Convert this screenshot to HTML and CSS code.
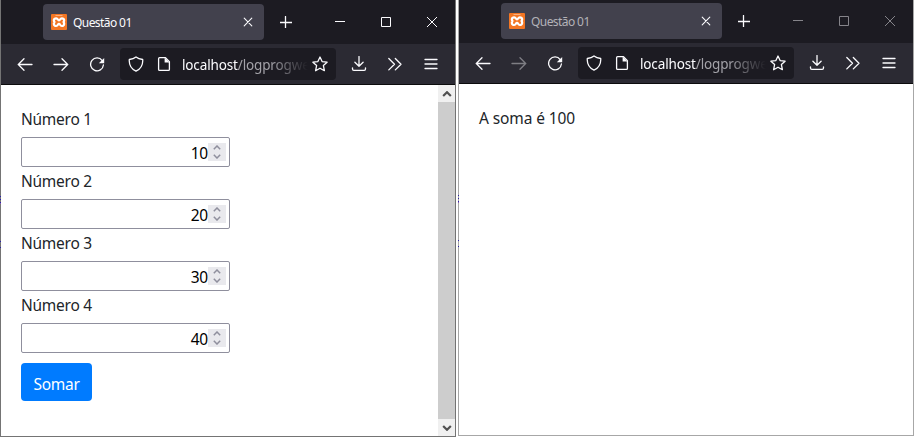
FILE: index.html
```html
<!DOCTYPE html>
<html lang="pt-BR">
<head>
<meta charset="utf-8">
<title>Questão 01</title>
<link rel="stylesheet" href="styles.css">
</head>
<body>
<svg class="defs" width="0" height="0">
  <symbol id="favicon" viewBox="0 0 16 16"><rect width="16" height="16" rx="1" fill="#f37623"/><path d="M4.500 1.500H11.500" stroke="#fff" stroke-opacity=".6" stroke-width=".7"/><path d="M5.200 4.300c-3 0-2.900 3.300-1 3.700c-1.900.4-2 4 1 4c1.900 0 1.500-2.100 2.800-2.100s.9 2.100 2.800 2.100c3 0 2.900-3.600 1-4c1.900-.4 2-3.700-1-3.700c-1.900 0-1.500 2-2.800 2s-.9-2-2.800-2z" fill="none" stroke="#fff" stroke-width="2.200"/></symbol>
  <symbol id="back" viewBox="0 0 16 16"><path d="M1.200 8.500H15M7 2.800L1.300 8.500L7 14.200"/></symbol>
  <symbol id="forward" viewBox="0 0 16 16"><path d="M1 8.500H14.800M9 2.800l5.700 5.700L9 14.200"/></symbol>
  <symbol id="reload" viewBox="0 0 16 16"><path d="M13.200 4.600A6.400 6.400 0 1 0 14.400 9"/><path class="solid" d="M15.200 2v5.200H9.800z"/></symbol>
  <symbol id="shield" viewBox="0 0 16 16"><path d="M8 .9C6.200 2.400 3.800 3.200 1.300 3.500C.9 8.600 3 12.800 8 15.200C13 12.800 15.100 8.600 14.700 3.500C12.200 3.200 9.800 2.400 8 .9z"/></symbol>
  <symbol id="page" viewBox="0 0 16 16"><path d="M3.600 1.700H9.500L13.400 5.600V13.400q0 1-1 1H3.600q-1 0-1-1V2.700q0-1 1-1z"/><path class="solid" d="M8.600 1.500V6.500H13.500z"/></symbol>
  <symbol id="star" viewBox="0 0 16 16"><path d="M8 1l2.100 4.600l5 .6l-3.700 3.400l1 5.100L8 12.200l-4.400 2.500l1-5.100L.9 6.200l5-.6z"/></symbol>
  <symbol id="download" viewBox="0 0 16 16"><path d="M8 .5V10M3.900 6.200L8 10.300l4.100-4.100M1.500 11.800V13q0 1.300 1.300 1.300H13.200q1.300 0 1.300-1.300V11.800"/></symbol>
  <symbol id="more" viewBox="0 0 16 16"><path d="M1.800 2.500l5.700 5.700l-5.700 5.700M8.300 2.500L14 8.200l-5.700 5.700"/></symbol>
  <symbol id="menu" viewBox="0 0 16 16"><path d="M2 3.500H14M2 8H14M2 12.500H14"/></symbol>
  <symbol id="tabclose" viewBox="0 0 10 10"><path d="M1.200 1.200l7.600 7.600M8.800 1.200L1.200 8.800"/></symbol>
  <symbol id="plus" viewBox="0 0 12 12"><path d="M0 6.500H12M5.500 .5V12"/></symbol>
  <symbol id="min" viewBox="0 0 10 10"><path d="M0 4.500H10"/></symbol>
  <symbol id="max" viewBox="0 0 10 10"><path d="M.5 .5H9.500V9.500H.5z"/></symbol>
  <symbol id="close" viewBox="0 0 10 10"><path d="M0 0L10 10M10 0L0 10"/></symbol>
  <symbol id="chev" viewBox="0 0 8 5"><path d="M.8 4.200L4 1l3.200 3.200"/></symbol>
</svg>
<main class="desktop">
  <section class="window active">
    <header class="titlebar">
      <div class="tab"><svg class="favicon"><use href="#favicon"/></svg><span class="tab-title">Questão 01</span><svg class="icon tab-close"><use href="#tabclose"/></svg></div>
      <svg class="icon new-tab"><use href="#plus"/></svg>
      <div class="controls"><svg class="icon"><use href="#min"/></svg><svg class="icon"><use href="#max"/></svg><svg class="icon"><use href="#close"/></svg></div>
    </header>
    <nav class="toolbar">
      <span class="tool"><svg class="icon"><use href="#back"/></svg></span>
      <span class="tool"><svg class="icon"><use href="#forward"/></svg></span>
      <span class="tool"><svg class="icon"><use href="#reload"/></svg></span>
      <div class="urlbar"><svg class="icon"><use href="#shield"/></svg><svg class="icon page-icon"><use href="#page"/></svg><span class="url">localhost<span class="path">/logprogwe</span></span><svg class="icon star"><use href="#star"/></svg></div>
      <span class="tool"><svg class="icon"><use href="#download"/></svg></span>
      <span class="tool"><svg class="icon"><use href="#more"/></svg></span>
      <span class="tool"><svg class="icon"><use href="#menu"/></svg></span>
    </nav>
    <div class="viewport">
      <form class="content">
        <label class="label">Número 1</label>
        <div class="number"><span class="value">10</span><span class="spin"><svg><use href="#chev"/></svg><svg class="down"><use href="#chev"/></svg></span></div>
        <label class="label">Número 2</label>
        <div class="number"><span class="value">20</span><span class="spin"><svg><use href="#chev"/></svg><svg class="down"><use href="#chev"/></svg></span></div>
        <label class="label">Número 3</label>
        <div class="number"><span class="value">30</span><span class="spin"><svg><use href="#chev"/></svg><svg class="down"><use href="#chev"/></svg></span></div>
        <label class="label">Número 4</label>
        <div class="number"><span class="value">40</span><span class="spin"><svg><use href="#chev"/></svg><svg class="down"><use href="#chev"/></svg></span></div>
        <button class="submit" type="button">Somar</button>
      </form>
      <div class="scrollbar"><span class="arrow"><svg><use href="#chev"/></svg></span><span class="thumb"></span><span class="arrow"><svg class="down"><use href="#chev"/></svg></span></div>
    </div>
  </section>
  <section class="window inactive">
    <header class="titlebar">
      <div class="tab"><svg class="favicon"><use href="#favicon"/></svg><span class="tab-title">Questão 01</span><svg class="icon tab-close"><use href="#tabclose"/></svg></div>
      <svg class="icon new-tab"><use href="#plus"/></svg>
      <div class="controls"><svg class="icon"><use href="#min"/></svg><svg class="icon"><use href="#max"/></svg><svg class="icon"><use href="#close"/></svg></div>
    </header>
    <nav class="toolbar">
      <span class="tool"><svg class="icon"><use href="#back"/></svg></span>
      <span class="tool disabled"><svg class="icon"><use href="#forward"/></svg></span>
      <span class="tool"><svg class="icon"><use href="#reload"/></svg></span>
      <div class="urlbar"><svg class="icon"><use href="#shield"/></svg><svg class="icon page-icon"><use href="#page"/></svg><span class="url">localhost<span class="path">/logprogwe</span></span><svg class="icon star"><use href="#star"/></svg></div>
      <span class="tool"><svg class="icon"><use href="#download"/></svg></span>
      <span class="tool"><svg class="icon"><use href="#more"/></svg></span>
      <span class="tool"><svg class="icon"><use href="#menu"/></svg></span>
    </nav>
    <div class="viewport">
      <div class="content"><p class="label">A soma é 100</p></div>
    </div>
  </section>
</main>
</body>
</html>
```
FILE: styles.css
```css
* { box-sizing: border-box; }
body { margin: 0; background: #fff; font-family: "Noto Sans", "Open Sans", sans-serif; overflow: hidden; }
svg { display: block; flex: none; }
.defs { position: absolute; }
.desktop { display: flex; align-items: flex-start; gap: 2px; height: 444px; }
.window { position: relative; display: flex; flex-direction: column; width: 456px; height: 437px; border: 1px solid #747474; border-top: 0; }
.window.inactive { height: 436px; border-color: #a7a7a7; }
/* specks of the desktop showing through the window's left edge */
.window::before { content: ""; position: absolute; left: -1px; top: 196px; width: 1px; height: 1px; background: #2a20a8; box-shadow: 0 3px #2a20a8, 0 6px #2a20a8, 0 7px #8a5bb0, 0 45px #2a20a8, 0 51px #2a20a8; }
.inactive::before { top: 195px; }
.titlebar { display: flex; align-items: flex-end; flex: none; height: 44px; padding-left: 42px; background: #1c1b22; }
.inactive .titlebar { height: 43px; }
.tab { display: flex; align-items: center; width: 221px; height: 36px; margin-bottom: 4px; padding: 0 11px 0 8px; border-radius: 4px; background: #42414d; }
.favicon { width: 16px; height: 16px; }
.tab-title { flex: 1; margin-left: 6px; color: #fbfbfe; font-size: 12px; line-height: 16px; letter-spacing: -.58px; padding-top: 1px; }
.inactive .tab-title { color: #b3b2b8; }
.icon { width: 16px; height: 16px; fill: none; stroke: #fbfbfe; stroke-width: 1.3; stroke-linecap: round; stroke-linejoin: round; }
.solid { fill: #fbfbfe; stroke: none; }
.tab-close { width: 10px; height: 10px; stroke-width: 1.1; }
.new-tab { width: 12px; height: 12px; margin: 0 0 16px 16px; stroke-width: 1.3; }
.controls { display: flex; gap: 36px; margin: 0 0 17px 43px; }
.controls .icon { width: 10px; height: 10px; stroke-width: 1; stroke-linecap: butt; stroke-linejoin: miter; }
.inactive .controls .icon { stroke: #85848a; }
.toolbar { display: flex; align-items: center; flex: none; height: 41px; padding: 0 6px; background: #2b2a33; border-bottom: 1px solid #0c0c0d; }
.tool { display: grid; place-items: center; width: 36px; height: 32px; }
.disabled { opacity: .4; }
.urlbar { display: flex; align-items: center; width: 216px; height: 32px; margin: 0 5px; padding: 0 8px; border-radius: 4px; background: #1c1b22; }
.page-icon { margin-left: 12px; }
.url { flex: 1; margin-left: 10px; white-space: nowrap; color: #fbfbfe; font-size: 13.5px; line-height: 20px; letter-spacing: -.14px; padding-top: 1px; -webkit-mask-image: linear-gradient(to right, #000 88px, transparent 126px); mask-image: linear-gradient(to right, #000 88px, transparent 126px); }
.path { color: #a3a2a8; }
.star { margin-left: -2px; }
.viewport { display: flex; flex: 1; min-height: 0; background: #fff; }
.content { flex: 1; padding: 21px 20px 0; }
.label { display: block; height: 24px; margin: 0 0 7px; color: #212529; font-size: 15.5px; line-height: 26px; letter-spacing: -.25px; }
.inactive .label { letter-spacing: -.1px; }
.number { display: flex; align-items: center; justify-content: flex-end; width: 209px; height: 30px; margin-bottom: 1px; padding-right: 3px; border: 1px solid #8f8f9d; border-radius: 2px; color: #000; font-size: 15.5px; }
.value { padding-top: 2px; line-height: 24px; letter-spacing: -.2px; }
.spin { display: flex; flex-direction: column; align-items: center; justify-content: space-between; width: 18px; height: 18px; padding: 2px 0; background: #e9e9ed; }
.spin svg { width: 8px; height: 5px; fill: none; stroke: #8f8f9d; stroke-width: 1.5; }
.down { transform: scaleY(-1); }
.submit { display: block; width: 71px; height: 38px; margin-top: 10px; padding: 3px 0 0; border: 0; border-radius: 4px; background: #007bff; color: #fff; font: 15.5px "Noto Sans", sans-serif; letter-spacing: -.3px; }
.scrollbar { display: flex; flex-direction: column; width: 17px; background: #f0f0f0; }
.arrow { display: grid; place-items: center; height: 17px; }
.arrow svg { width: 10px; height: 6px; fill: none; stroke: #505050; stroke-width: 1.8; }
.thumb { flex: 1; background: #cdcdcd; }
```
